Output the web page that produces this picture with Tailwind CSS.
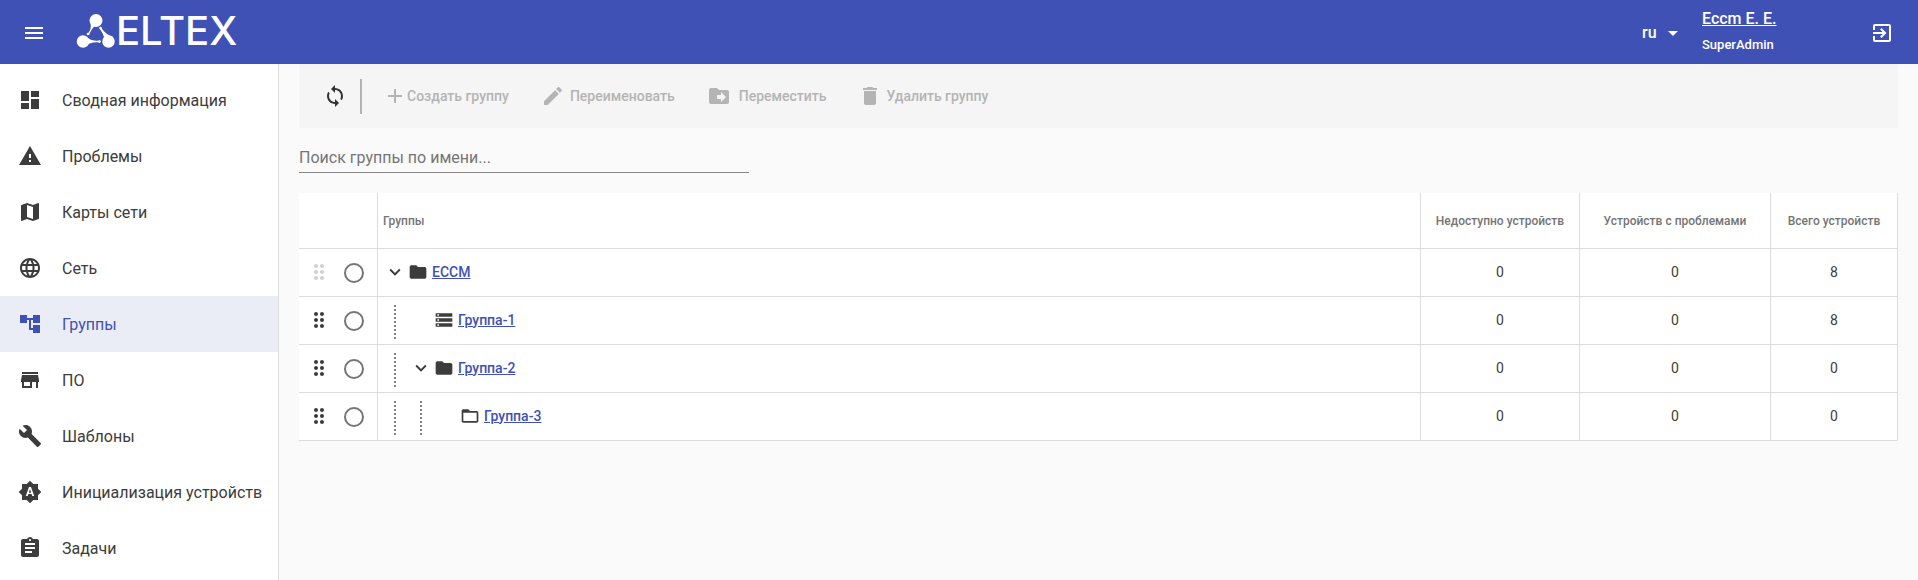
<!DOCTYPE html>
<html lang="ru">
  <head>
    <meta charset="UTF-8" />
    <meta name="viewport" content="width=device-width, initial-scale=1.0" />
    <script src="https://cdn.jsdelivr.net/npm/@tailwindcss/browser@4"></script>
    <title>Группы</title>
  </head>
  <body class="bg-[#fafafa] font-['Roboto',sans-serif] text-[#3c3c3c] min-h-screen flex flex-col">
    <!-- icons -->
    <svg class="hidden">
      <symbol id="menu" viewBox="0 0 24 24"><path d="M3 18h18v-2H3v2zm0-5h18v-2H3v2zm0-7v2h18V6H3z" /></symbol>
      <symbol id="exit" viewBox="0 0 24 24"><path d="M10.09 15.59L11.5 17l5-5-5-5-1.41 1.41L12.67 11H3v2h9.67l-2.58 2.59zM19 3H5c-1.11 0-2 .9-2 2v4h2V5h14v14H5v-4H3v4c0 1.1.89 2 2 2h14c1.1 0 2-.9 2-2V5c0-1.1-.9-2-2-2z" /></symbol>
      <symbol id="dashboard" viewBox="0 0 24 24"><path d="M3 13h8V3H3v10zm0 8h8v-6H3v6zm10 0h8V11h-8v10zm0-18v6h8V3h-8z" /></symbol>
      <symbol id="warning" viewBox="0 0 24 24"><path d="M1 21h22L12 2 1 21zm12-3h-2v-2h2v2zm0-4h-2v-4h2v4z" /></symbol>
      <symbol id="map" viewBox="0 0 24 24"><path d="M20.5 3l-.16.03L15 5.1 9 3 3.36 4.9c-.21.07-.36.25-.36.48V20.5c0 .28.22.5.5.5l.16-.03L9 18.9l6 2.1 5.64-1.9c.21-.07.36-.25.36-.48V3.5c0-.28-.22-.5-.5-.5zM15 19l-6-2.11V5l6 2.11V19z" /></symbol>
      <symbol id="globe" viewBox="0 0 24 24"><path d="M11.99 2C6.47 2 2 6.48 2 12s4.47 10 9.99 10C17.52 22 22 17.52 22 12S17.52 2 11.99 2zm6.93 6h-2.95c-.32-1.25-.78-2.45-1.38-3.56 1.84.63 3.37 1.91 4.33 3.56zM12 4.04c.83 1.2 1.48 2.53 1.91 3.96h-3.82c.43-1.43 1.08-2.76 1.91-3.96zM4.26 14C4.1 13.36 4 12.69 4 12s.1-1.36.26-2h3.38c-.08.66-.14 1.32-.14 2s.06 1.34.14 2H4.26zm.82 2h2.95c.32 1.25.78 2.45 1.38 3.56-1.84-.63-3.37-1.9-4.33-3.56zm2.95-8H5.08c.96-1.66 2.49-2.93 4.33-3.56C8.81 5.55 8.35 6.75 8.03 8zM12 19.96c-.83-1.2-1.48-2.53-1.91-3.96h3.82c-.43 1.43-1.08 2.76-1.91 3.96zM14.34 14H9.66c-.09-.66-.16-1.32-.16-2s.07-1.35.16-2h4.68c.09.65.16 1.32.16 2s-.07 1.34-.16 2zm.25 5.56c.6-1.11 1.06-2.31 1.38-3.56h2.95c-.96 1.65-2.49 2.93-4.33 3.56zM16.36 14c.08-.66.14-1.32.14-2s-.06-1.34-.14-2h3.38c.16.64.26 1.31.26 2s-.1 1.36-.26 2h-3.38z" /></symbol>
      <symbol id="tree" viewBox="0 0 24 24"><path d="M22 11V3h-7v3H9V3H2v8h7V8h2v10h4v3h7v-8h-7v3h-2V8h2v3z" /></symbol>
      <symbol id="store" viewBox="0 0 24 24"><path d="M20 4H4v2h16V4zm1 10v-2l-1-5H4l-1 5v2h1v6h10v-6h4v6h2v-6h1zm-9 4H6v-4h6v4z" /></symbol>
      <symbol id="wrench" viewBox="0 0 24 24"><path d="M22.7 19l-9.1-9.1c.9-2.3.4-5-1.5-6.9-2-2-5-2.4-7.4-1.3L9 6 6 9 1.6 4.7C.4 7.1.9 10.1 2.9 12.1c1.9 1.9 4.6 2.4 6.9 1.5l9.1 9.1c.4.4 1 .4 1.4 0l2.3-2.3c.5-.4.5-1.1.1-1.4z" /></symbol>
      <symbol id="auto" viewBox="0 0 24 24"><path d="M10.85 12.65h2.3L12 9l-1.15 3.65zM20 8.69V4h-4.69L12 .69 8.69 4H4v4.69L.69 12 4 15.31V20h4.69L12 23.31 15.31 20H20v-4.69L23.31 12 20 8.69zM14.3 16l-.7-2h-3.2l-.7 2H7.8L11 7h2l3.2 9h-1.9z" /></symbol>
      <symbol id="tasks" viewBox="0 0 24 24"><path d="M19 3h-4.18C14.4 1.84 13.3 1 12 1c-1.3 0-2.4.84-2.82 2H5c-1.1 0-2 .9-2 2v14c0 1.1.9 2 2 2h14c1.1 0 2-.9 2-2V5c0-1.1-.9-2-2-2zm-7 0c.55 0 1 .45 1 1s-.45 1-1 1-1-.45-1-1 .45-1 1-1zm2 14H7v-2h7v2zm3-4H7v-2h10v2zm0-4H7V7h10v2z" /></symbol>
      <symbol id="refresh" viewBox="0 0 24 24"><path d="M12 4V1L8 5l4 4V6c3.31 0 6 2.69 6 6 0 1.01-.25 1.97-.7 2.8l1.46 1.46C19.54 15.03 20 13.57 20 12c0-4.42-3.58-8-8-8zm0 14c-3.31 0-6-2.69-6-6 0-1.01.25-1.97.7-2.8L5.24 7.74C4.46 8.97 4 10.43 4 12c0 4.42 3.58 8 8 8v3l4-4-4-4v3z" /></symbol>
      <symbol id="plus" viewBox="0 0 24 24"><path d="M19 13h-6v6h-2v-6H5v-2h6V5h2v6h6v2z" /></symbol>
      <symbol id="edit" viewBox="0 0 24 24"><path d="M3 17.25V21h3.75L17.81 9.94l-3.75-3.75L3 17.25zM20.71 7.04c.39-.39.39-1.02 0-1.41l-2.34-2.34c-.39-.39-1.02-.39-1.41 0l-1.83 1.83 3.75 3.75 1.83-1.83z" /></symbol>
      <symbol id="move" viewBox="0 0 24 24"><path d="M20 6h-8l-2-2H4c-1.1 0-2 .9-2 2v12c0 1.1.9 2 2 2h16c1.1 0 2-.9 2-2V8c0-1.1-.9-2-2-2zm-6 12v-3h-4v-4h4V8l5 5-5 5z" /></symbol>
      <symbol id="trash" viewBox="0 0 24 24"><path d="M6 19c0 1.1.9 2 2 2h8c1.1 0 2-.9 2-2V7H6v12zM19 4h-3.5l-1-1h-5l-1 1H5v2h14V4z" /></symbol>
      <symbol id="drag" viewBox="0 0 24 24"><path d="M11 18c0 1.1-.9 2-2 2s-2-.9-2-2 .9-2 2-2 2 .9 2 2zm-2-8c-1.1 0-2 .9-2 2s.9 2 2 2 2-.9 2-2-.9-2-2-2zm0-6c-1.1 0-2 .9-2 2s.9 2 2 2 2-.9 2-2-.9-2-2-2zm6 4c1.1 0 2-.9 2-2s-.9-2-2-2-2 .9-2 2 .9 2 2 2zm0 2c-1.1 0-2 .9-2 2s.9 2 2 2 2-.9 2-2-.9-2-2-2zm0 6c-1.1 0-2 .9-2 2s.9 2 2 2 2-.9 2-2-.9-2-2-2z" /></symbol>
      <symbol id="chevron" viewBox="0 0 24 24"><path d="M16.59 8.59L12 13.17 7.41 8.59 6 10l6 6 6-6z" /></symbol>
      <symbol id="folder" viewBox="0 0 24 24"><path d="M10 4H4c-1.1 0-1.99.9-1.99 2L2 18c0 1.1.9 2 2 2h16c1.1 0 2-.9 2-2V8c0-1.1-.9-2-2-2h-8l-2-2z" /></symbol>
      <symbol id="folder-open" viewBox="0 0 24 24"><path d="M20 6h-8l-2-2H4c-1.1 0-1.99.9-1.99 2L2 18c0 1.1.9 2 2 2h16c1.1 0 2-.9 2-2V8c0-1.1-.9-2-2-2zm0 12H4V8h16v10z" /></symbol>
      <symbol id="storage" viewBox="0 0 24 24"><path d="M2 20h20v-4H2v4zm2-3h2v2H4v-2zM2 4v4h20V4H2zm4 3H4V5h2v2zm-4 7h20v-4H2v4zm2-3h2v2H4v-2z" /></symbol>
    </svg>

    <header class="h-16 shrink-0 bg-[#3f51b5] text-white flex items-center pt-0.5 pl-[22px] pr-6">
      <button type="button" aria-label="Меню"><svg class="size-6 fill-current"><use href="#menu" /></svg></button>
      <a href="#" class="flex items-center ml-[30px] pb-1">
        <svg class="w-10 h-9 fill-white" viewBox="0 0 40 36">
          <circle cx="20" cy="7.5" r="6.5" />
          <circle cx="7" cy="28.5" r="6.2" />
          <circle cx="32.5" cy="28.5" r="6.2" />
          <path d="M14.5 11 Q16 15 11.5 21.5 L13 22 Q16 15 19 13Z" />
          <path d="M37.5 24 Q30 22 25 14.5 L23.5 15.5 Q27 20 28 24Z" />
          <path d="M9 34 Q13 28.6 24 29.5 V27.6 Q16 28.5 12 25Z" />
          <circle cx="12" cy="21" r="1.3" />
          <circle cx="24.5" cy="15" r="1.3" />
          <circle cx="23.5" cy="28.5" r="1.3" />
        </svg>
        <span class="font-['Inter',sans-serif] font-medium text-[40px] leading-10">ELTEX</span>
      </a>
      <div class="ml-auto relative flex items-center">
        <select aria-label="Язык" class="appearance-none bg-transparent w-[60px] h-8 font-medium text-base focus:outline-none">
          <option>ru</option>
        </select>
        <svg class="absolute left-[26px] w-[10px] h-[5px] fill-white pointer-events-none" viewBox="0 0 10 5"><path d="M0 0h10L5 5z" /></svg>
      </div>
      <div class="flex flex-col w-[168px] leading-5 pb-0.5">
        <a href="#" class="underline font-medium text-base leading-5">Eccm E. E.</a>
        <span class="font-medium text-[13px] mt-[6px]">SuperAdmin</span>
      </div>
      <button type="button" aria-label="Выход"><svg class="size-6 fill-current"><use href="#exit" /></svg></button>
    </header>

    <div class="flex flex-1">
      <nav class="w-[279px] shrink-0 bg-white border-r border-[#dcdcdc] pt-2">
        <a href="#" class="flex items-center gap-5 h-14 pl-[18px]"><svg class="size-6 fill-current"><use href="#dashboard" /></svg><span class="pt-px">Сводная информация</span></a>
        <a href="#" class="flex items-center gap-5 h-14 pl-[18px]"><svg class="size-6 fill-current"><use href="#warning" /></svg><span class="pt-px">Проблемы</span></a>
        <a href="#" class="flex items-center gap-5 h-14 pl-[18px]"><svg class="size-6 fill-current"><use href="#map" /></svg><span class="pt-px">Карты сети</span></a>
        <a href="#" class="flex items-center gap-5 h-14 pl-[18px]"><svg class="size-6 fill-current"><use href="#globe" /></svg><span class="pt-px">Сеть</span></a>
        <a href="#" class="flex items-center gap-5 h-14 pl-[18px] bg-[#eaedf6] text-[#3f51b5]"><svg class="size-6 fill-current"><use href="#tree" /></svg><span class="pt-px">Группы</span></a>
        <a href="#" class="flex items-center gap-5 h-14 pl-[18px]"><svg class="size-6 fill-current"><use href="#store" /></svg><span class="pt-px">ПО</span></a>
        <a href="#" class="flex items-center gap-5 h-14 pl-[18px]"><svg class="size-6 fill-current"><use href="#wrench" /></svg><span class="pt-px">Шаблоны</span></a>
        <a href="#" class="flex items-center gap-5 h-14 pl-[18px]"><svg class="size-6 fill-current"><use href="#auto" /></svg><span class="pt-px">Инициализация устройств</span></a>
        <a href="#" class="flex items-center gap-5 h-14 pl-[18px]"><svg class="size-6 fill-current"><use href="#tasks" /></svg><span class="pt-px">Задачи</span></a>
      </nav>

      <main class="flex-1 px-5">
        <div class="h-16 bg-[#f5f5f5] flex items-center pl-6 text-sm font-medium text-[#b4b4b4]">
          <button type="button" aria-label="Обновить" class="text-[#333]"><svg class="size-6 fill-current"><use href="#refresh" /></svg></button>
          <div class="w-[2px] h-[35px] bg-[#b4b4b4] ml-[13px]"></div>
          <button type="button" disabled class="flex items-center ml-[21px]"><svg class="size-6 fill-current"><use href="#plus" /></svg>Создать группу</button>
          <button type="button" disabled class="flex items-center gap-[5px] ml-8"><svg class="size-6 fill-current"><use href="#edit" /></svg>Переименовать</button>
          <button type="button" disabled class="flex items-center gap-2 ml-8"><svg class="size-6 fill-current"><use href="#move" /></svg>Переместить</button>
          <button type="button" disabled class="flex items-center gap-1 ml-8"><svg class="size-6 fill-current"><use href="#trash" /></svg>Удалить группу</button>
        </div>

        <input
          type="text"
          aria-label="Поиск группы по имени"
          placeholder="Поиск группы по имени..."
          class="block w-[450px] max-w-full mt-4 h-[29px] pb-0.5 border-b border-[#858585] bg-transparent text-base placeholder:text-[#757575] focus:outline-none"
        />

        <table class="w-full table-fixed mt-5 bg-white text-sm border-separate border-spacing-0">
          <thead>
            <tr class="h-14 text-xs text-[#757575]">
              <th class="w-[79px] border-r border-b border-[#dcdcdc]"></th>
              <th class="border-r border-b border-[#dcdcdc] font-medium text-left pl-[5px]">Группы</th>
              <th class="w-[159px] border-r border-b border-[#dcdcdc] font-medium">Недоступно устройств</th>
              <th class="w-[191px] border-r border-b border-[#dcdcdc] font-medium">Устройств с проблемами</th>
              <th class="w-[127px] border-r border-b border-[#dcdcdc] font-medium">Всего устройств</th>
            </tr>
          </thead>
          <tbody class="text-center">
            <tr class="h-12">
              <td class="border-r border-b border-[#dcdcdc]">
                <div class="flex items-center gap-[13px] pl-2">
                  <svg class="size-6 mb-0.5 fill-[#d0d0d0]"><use href="#drag" /></svg>
                  <input type="radio" name="group" aria-label="ECCM" class="appearance-none size-5 rounded-full border-2 border-[#757575] checked:bg-[#3f51b5]" />
                </div>
              </td>
              <td class="pb-0.5 border-r border-b border-[#dcdcdc]">
                <div class="flex items-center pl-1">
                  <button type="button" aria-label="Свернуть" class="w-[26px] flex justify-center"><svg class="size-[22px] fill-current"><use href="#chevron" /></svg></button>
                  <svg class="size-5 fill-current"><use href="#folder" /></svg>
                  <a href="#" class="ml-1 font-medium underline text-[#3f51b5]">ECCM</a>
                </div>
              </td>
              <td class="pb-0.5 border-r border-b border-[#dcdcdc]">0</td>
              <td class="pb-0.5 border-r border-b border-[#dcdcdc]">0</td>
              <td class="pb-0.5 border-r border-b border-[#dcdcdc]">8</td>
            </tr>
            <tr class="h-12">
              <td class="border-r border-b border-[#dcdcdc]">
                <div class="flex items-center gap-[13px] pl-2">
                  <svg class="size-6 mb-0.5 fill-current"><use href="#drag" /></svg>
                  <input type="radio" name="group" aria-label="Группа-1" class="appearance-none size-5 rounded-full border-2 border-[#757575] checked:bg-[#3f51b5]" />
                </div>
              </td>
              <td class="pb-0.5 border-r border-b border-[#dcdcdc]">
                <div class="flex items-center pl-1">
                  <div class="w-[26px] flex justify-center"><svg class="w-[2px] h-[34px] mt-1 stroke-[#858585]"><path d="M1 0V34" stroke-width="2" stroke-dasharray="2 2" /></svg></div>
                  <div class="w-[26px]"></div>
                  <svg class="size-5 fill-current"><use href="#storage" /></svg>
                  <a href="#" class="ml-1 font-medium underline text-[#3f51b5]">Группа-1</a>
                </div>
              </td>
              <td class="pb-0.5 border-r border-b border-[#dcdcdc]">0</td>
              <td class="pb-0.5 border-r border-b border-[#dcdcdc]">0</td>
              <td class="pb-0.5 border-r border-b border-[#dcdcdc]">8</td>
            </tr>
            <tr class="h-12">
              <td class="border-r border-b border-[#dcdcdc]">
                <div class="flex items-center gap-[13px] pl-2">
                  <svg class="size-6 mb-0.5 fill-current"><use href="#drag" /></svg>
                  <input type="radio" name="group" aria-label="Группа-2" class="appearance-none size-5 rounded-full border-2 border-[#757575] checked:bg-[#3f51b5]" />
                </div>
              </td>
              <td class="pb-0.5 border-r border-b border-[#dcdcdc]">
                <div class="flex items-center pl-1">
                  <div class="w-[26px] flex justify-center"><svg class="w-[2px] h-[34px] mt-1 stroke-[#858585]"><path d="M1 0V34" stroke-width="2" stroke-dasharray="2 2" /></svg></div>
                  <button type="button" aria-label="Свернуть" class="w-[26px] flex justify-center"><svg class="size-[22px] fill-current"><use href="#chevron" /></svg></button>
                  <svg class="size-5 fill-current"><use href="#folder" /></svg>
                  <a href="#" class="ml-1 font-medium underline text-[#3f51b5]">Группа-2</a>
                </div>
              </td>
              <td class="pb-0.5 border-r border-b border-[#dcdcdc]">0</td>
              <td class="pb-0.5 border-r border-b border-[#dcdcdc]">0</td>
              <td class="pb-0.5 border-r border-b border-[#dcdcdc]">0</td>
            </tr>
            <tr class="h-12">
              <td class="border-r border-b border-[#dcdcdc]">
                <div class="flex items-center gap-[13px] pl-2">
                  <svg class="size-6 mb-0.5 fill-current"><use href="#drag" /></svg>
                  <input type="radio" name="group" aria-label="Группа-3" class="appearance-none size-5 rounded-full border-2 border-[#757575] checked:bg-[#3f51b5]" />
                </div>
              </td>
              <td class="pb-0.5 border-r border-b border-[#dcdcdc]">
                <div class="flex items-center pl-1">
                  <div class="w-[26px] flex justify-center"><svg class="w-[2px] h-[34px] mt-1 stroke-[#858585]"><path d="M1 0V34" stroke-width="2" stroke-dasharray="2 2" /></svg></div>
                  <div class="w-[26px] flex justify-center"><svg class="w-[2px] h-[34px] mt-1 stroke-[#858585]"><path d="M1 0V34" stroke-width="2" stroke-dasharray="2 2" /></svg></div>
                  <div class="w-[26px]"></div>
                  <svg class="size-5 fill-current"><use href="#folder-open" /></svg>
                  <a href="#" class="ml-1 font-medium underline text-[#3f51b5]">Группа-3</a>
                </div>
              </td>
              <td class="pb-0.5 border-r border-b border-[#dcdcdc]">0</td>
              <td class="pb-0.5 border-r border-b border-[#dcdcdc]">0</td>
              <td class="pb-0.5 border-r border-b border-[#dcdcdc]">0</td>
            </tr>
          </tbody>
        </table>
      </main>
    </div>
  </body>
</html>
